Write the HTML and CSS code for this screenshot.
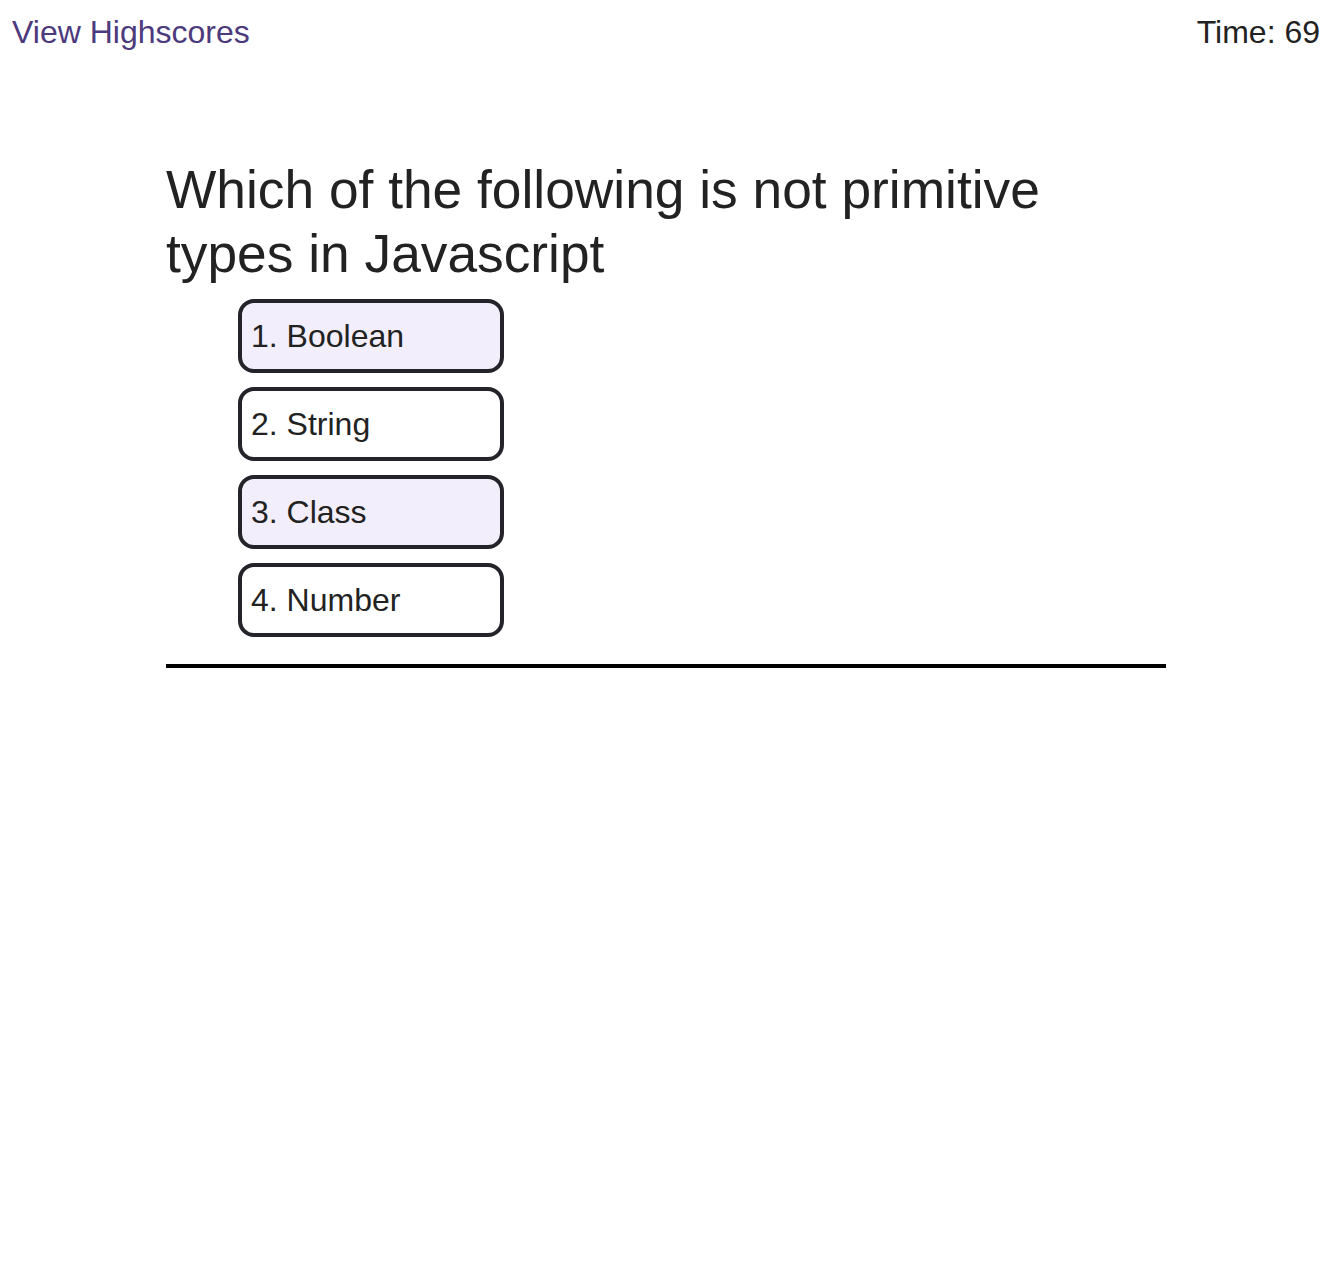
FILE: index.html
```html
<!DOCTYPE html>
<html>
<head>
<meta charset="utf-8">
<link rel="stylesheet" href="styles.css">
</head>
<body>
<header class="topbar">
  <a class="highscores" href="#">View Highscores</a>
  <span class="timer">Time: 69</span>
</header>
<main class="quiz">
  <h1 class="question">Which of the following is not primitive types in Javascript</h1>
  <div class="choices">
    <button class="choice alt">1. Boolean</button>
    <button class="choice">2. String</button>
    <button class="choice alt">3. Class</button>
    <button class="choice">4. Number</button>
  </div>
  <div class="divider"></div>
</main>
</body>
</html>
```
FILE: styles.css
```css
html, body {
  margin: 0;
  padding: 0;
  background: #ffffff;
  font-family: "Liberation Sans", Arial, sans-serif;
  color: #222222;
}
.topbar {
  display: flex;
  justify-content: space-between;
  align-items: flex-start;
  padding: 14px 1px 0 12px;
  font-size: 32px;
  line-height: 37px;
}
.highscores {
  color: #4c3a7c;
  text-decoration: none;
}
.timer {
  color: #222222;
}
.quiz {
  width: 1000px;
  margin: 107px 0 0 166px;
}
.question {
  margin: 0;
  font-size: 53.3px;
  line-height: 64px;
  font-weight: normal;
  color: #222222;
}
.choices {
  display: flex;
  flex-direction: column;
  align-items: flex-start;
  gap: 14px;
  margin: 13px 0 0 72px;
}
.choice {
  box-sizing: border-box;
  width: 266px;
  height: 74px;
  border: 4px solid #24232a;
  border-radius: 16px;
  background: #ffffff;
  padding: 0 0 0 9px;
  text-align: left;
  font-family: "Liberation Sans", Arial, sans-serif;
  font-size: 32px;
  color: #222222;
}
.choice.alt {
  background: #f3eefb;
}
.divider {
  height: 4px;
  background: #000000;
  margin-top: 27px;
}
```
